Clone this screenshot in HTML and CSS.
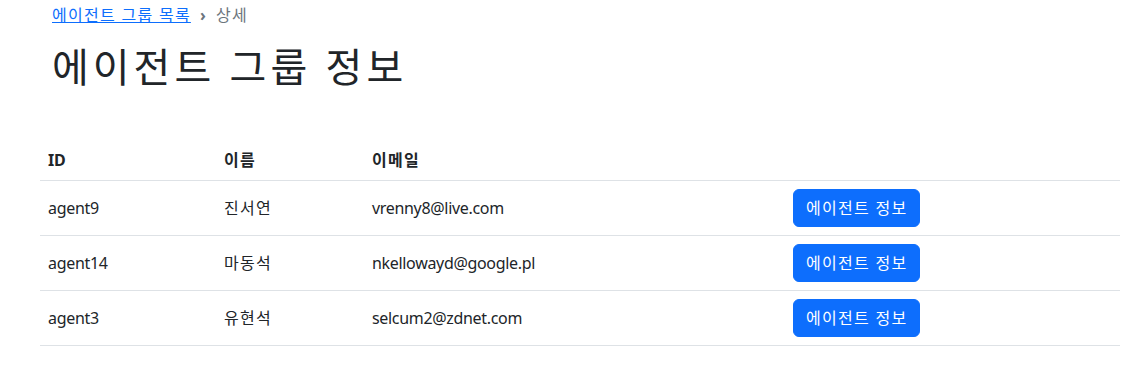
FILE: index.html
```html
<!DOCTYPE html>
<html lang="ko">
<head>
  <meta charset="UTF-8">
  <title>에이전트 그룹 정보</title>
  <meta name="viewport" content="width=device-width, initial-scale=1">
  <link rel="stylesheet" href="styles.css">
</head>
<body>
  <div class="page">
    <nav class="breadcrumb">
      <a href="#">에이전트 그룹 목록</a>
      <span class="divider">›</span>
      <span class="current">상세</span>
    </nav>
    <h1 class="title">에이전트 그룹 정보</h1>
    <!-- 그룹에 속한 에이전트 -->
    <table class="agents">
      <thead>
        <tr><th class="col-id en">ID</th><th class="col-name">이름</th><th class="col-mail">이메일</th><th></th></tr>
      </thead>
      <tbody>
        <tr><td class="en">agent9</td><td>진서연</td><td class="en">vrenny8@live.com</td><td><button class="btn">에이전트 정보</button></td></tr>
        <tr><td class="en">agent14</td><td>마동석</td><td class="en">nkellowayd@google.pl</td><td><button class="btn">에이전트 정보</button></td></tr>
        <tr><td class="en">agent3</td><td>유현석</td><td class="en">selcum2@zdnet.com</td><td><button class="btn">에이전트 정보</button></td></tr>
      </tbody>
    </table>
  </div>
</body>
</html>
```

FILE: styles.css
```css
:root { --primary: #0d6efd; --text: #212529; --muted: #6c757d; --line: #dee2e6; }
* { box-sizing: border-box; margin: 0; padding: 0; }
body { font-family: "Noto Sans", "Noto Sans CJK KR", sans-serif; font-size: 16px; line-height: 1.5; color: var(--text); background: #fff; letter-spacing: 0.08em; }
.page { padding: 3px 23px 0 40px; }
.breadcrumb { display: flex; align-items: center; gap: 9px; padding-left: 12px; margin-bottom: 16px; }
.breadcrumb a { color: var(--primary); text-decoration: underline; }
.breadcrumb .divider { color: var(--muted); font-weight: bold; }
.breadcrumb .current { color: var(--muted); }
.title { font-size: 40px; font-weight: 400; line-height: 1.2; letter-spacing: 0.1em; padding-left: 12px; margin-bottom: 49px; }
.agents { width: 100%; border-collapse: collapse; }
.agents th, .agents td { padding: 8px; text-align: left; border-bottom: 1px solid var(--line); vertical-align: middle; }
.agents th { font-weight: bold; }
.agents .en { letter-spacing: -0.02em; }
.col-id { width: 176px; }
.col-name { width: 148px; }
.col-mail { width: 421px; }
.btn { font: inherit; letter-spacing: inherit; color: #fff; background: var(--primary); border: 1px solid var(--primary); border-radius: 6px; padding: 6px 12px; line-height: 1.5; cursor: pointer; }
```
